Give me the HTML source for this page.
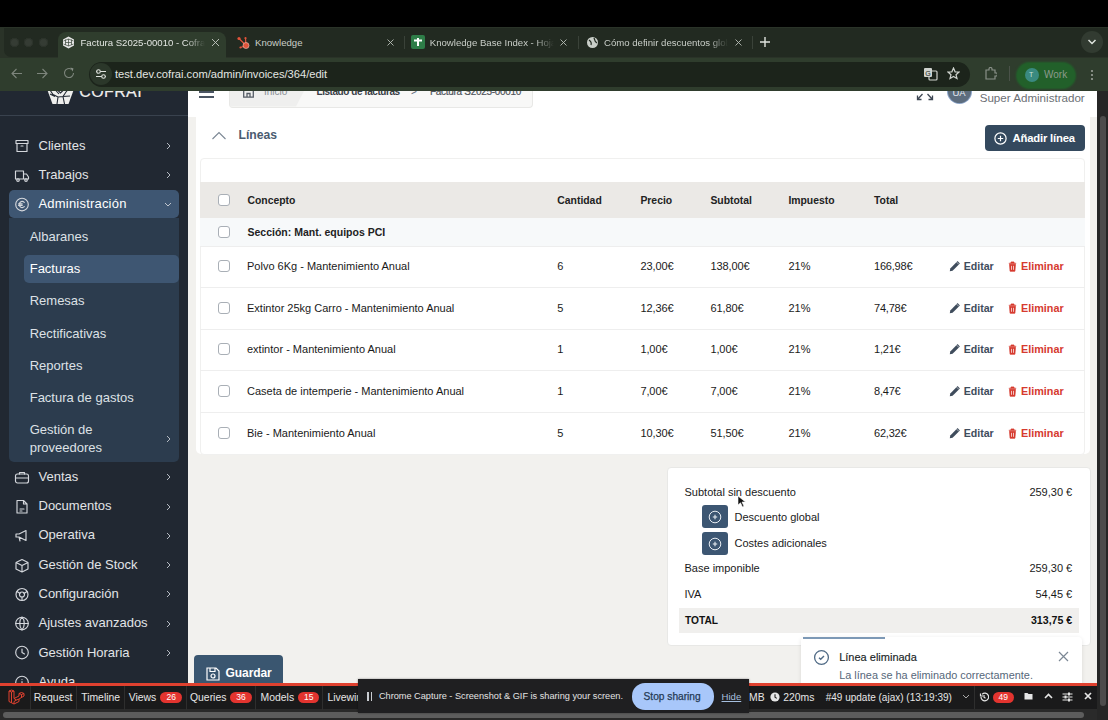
<!DOCTYPE html>
<html><head><meta charset="utf-8"><title>Factura</title>
<style>
html,body{margin:0;padding:0;width:1108px;height:720px;overflow:hidden;background:#000;}
body{position:relative;font-family:"Liberation Sans",sans-serif;}
.b{position:absolute;}
.t{position:absolute;white-space:nowrap;}
</style></head><body>
<div class="b" style="left:0px;top:91px;width:188px;height:593px;background:#212832;"></div>
<svg class="b" style="left:44px;top:84px;" width="34" height="22" viewBox="0 0 34 22"><polygon points="3,5 30,5 24.5,20 8.5,20" fill="#eeeeec"/><path d="M5,4.5L9,10.5L14,13L19,12.5L22,8L25,4.5 M12,4.5L16.5,9L21,4.5 M6,10L11,12.5 M19,12.5L26,12 M14,13L13,20 M19,12.5L20.5,20 M10,4.5L15,10" stroke="#212832" stroke-width="1.1" fill="none"/></svg>
<div class="t" style="left:79.2px;top:82.42px;font-size:16px;line-height:19px;font-weight:400;color:#eeeeec;-webkit-text-stroke:0.2px #eeeeec;letter-spacing:0.4px;">COFRAI</div>
<div class="b" style="left:0px;top:115px;width:188px;height:1px;background:#39424e;"></div>
<svg class="b" style="left:14px;top:138.3px;" width="16" height="15" viewBox="0 0 16 15"><path d="M2,2.5H14V5.5H2Z M3,5.5V13.5H13V5.5 M7,8H9" stroke="#d4d7dc" stroke-width="1.15" fill="none" stroke-linejoin="round" stroke-linecap="round"/></svg>
<div class="t" style="left:38.5px;top:137.56px;font-size:13px;line-height:16px;font-weight:400;color:#e2e4e7;">Clientes</div>
<svg class="b" style="left:166px;top:141.8px;" width="5" height="8" viewBox="0 0 5 8"><path d="M1,1L4,4L1,7" stroke="#b4bac2" stroke-width="1" fill="none"/></svg>
<svg class="b" style="left:14px;top:167.6px;" width="16" height="15" viewBox="0 0 16 15"><path d="M1.5,3H9.5V11H1.5Z M9.5,6H12.5L14.5,9V11H9.5" stroke="#d4d7dc" stroke-width="1.15" fill="none" stroke-linejoin="round" stroke-linecap="round"/><circle cx="4" cy="12" r="1.3" stroke="#d4d7dc" stroke-width="1.15" fill="none" stroke-linejoin="round" stroke-linecap="round"/><circle cx="12" cy="12" r="1.3" stroke="#d4d7dc" stroke-width="1.15" fill="none" stroke-linejoin="round" stroke-linecap="round"/></svg>
<div class="t" style="left:38.5px;top:166.86px;font-size:13px;line-height:16px;font-weight:400;color:#e2e4e7;">Trabajos</div>
<svg class="b" style="left:166px;top:171.1px;" width="5" height="8" viewBox="0 0 5 8"><path d="M1,1L4,4L1,7" stroke="#b4bac2" stroke-width="1" fill="none"/></svg>
<div class="b" style="left:9px;top:190px;width:170px;height:28px;background:#3e5672;border-radius:5px;"></div>
<div class="b" style="left:9px;top:218px;width:170px;height:244px;background:#2c3c4e;border-radius:0 0 5px 5px;"></div>
<svg class="b" style="left:14px;top:197px;" width="16" height="15" viewBox="0 0 16 15"><circle cx="8" cy="7.5" r="6.3" stroke="#d4d7dc" stroke-width="1.15" fill="none" stroke-linejoin="round" stroke-linecap="round"/><path d="M10.3,5.3A3,3 0 1 0 10.3,9.7M4.6,6.8H8.2M4.6,8.4H8.2" stroke="#d4d7dc" stroke-width="1.15" fill="none" stroke-linejoin="round" stroke-linecap="round"/></svg>
<div class="t" style="left:38.5px;top:196.16px;font-size:13px;line-height:16px;font-weight:400;color:#ffffff;letter-spacing:0.2px;">Administración</div>
<svg class="b" style="left:164px;top:202px;" width="8" height="5" viewBox="0 0 8 5"><path d="M1,1L4,4L7,1" stroke="#c0c6ce" stroke-width="1" fill="none"/></svg>
<div class="b" style="left:24px;top:254.5px;width:155px;height:28px;background:#3e5672;border-radius:5px;"></div>
<div class="t" style="left:29.7px;top:229.06px;font-size:13px;line-height:16px;font-weight:400;color:#dde1e6;">Albaranes</div>
<div class="t" style="left:29.7px;top:261.26px;font-size:13px;line-height:16px;font-weight:400;color:#ffffff;">Facturas</div>
<div class="t" style="left:29.7px;top:293.46px;font-size:13px;line-height:16px;font-weight:400;color:#dde1e6;">Remesas</div>
<div class="t" style="left:29.7px;top:325.66px;font-size:13px;line-height:16px;font-weight:400;color:#dde1e6;">Rectificativas</div>
<div class="t" style="left:29.7px;top:357.96px;font-size:13px;line-height:16px;font-weight:400;color:#dde1e6;">Reportes</div>
<div class="t" style="left:29.7px;top:390.16px;font-size:13px;line-height:16px;font-weight:400;color:#dde1e6;">Factura de gastos</div>
<div class="t" style="left:29.7px;top:422.06px;font-size:13px;line-height:16px;font-weight:400;color:#dde1e6;">Gestión de</div>
<div class="t" style="left:29.7px;top:439.76px;font-size:13px;line-height:16px;font-weight:400;color:#dde1e6;">proveedores</div>
<svg class="b" style="left:166px;top:434.5px;" width="5" height="8" viewBox="0 0 5 8"><path d="M1,1L4,4L1,7" stroke="#b4bac2" stroke-width="1" fill="none"/></svg>
<svg class="b" style="left:14px;top:469.75px;" width="16" height="15" viewBox="0 0 16 15"><rect x="1.5" y="4" width="13" height="9" rx="2" stroke="#d4d7dc" stroke-width="1.15" fill="none" stroke-linejoin="round" stroke-linecap="round"/><path d="M5.5,4V2.5H10.5V4M1.5,8H14.5" stroke="#d4d7dc" stroke-width="1.15" fill="none" stroke-linejoin="round" stroke-linecap="round"/></svg>
<div class="t" style="left:38.5px;top:469.01px;font-size:13px;line-height:16px;font-weight:400;color:#e2e4e7;">Ventas</div>
<svg class="b" style="left:166px;top:473.25px;" width="5" height="8" viewBox="0 0 5 8"><path d="M1,1L4,4L1,7" stroke="#b4bac2" stroke-width="1" fill="none"/></svg>
<svg class="b" style="left:14px;top:499px;" width="16" height="15" viewBox="0 0 16 15"><path d="M3,1.5H9.5L13,5V14H3Z M9.5,1.5V5H13 M6,10H10M6,12H8" stroke="#d4d7dc" stroke-width="1.15" fill="none" stroke-linejoin="round" stroke-linecap="round"/></svg>
<div class="t" style="left:38.5px;top:498.26px;font-size:13px;line-height:16px;font-weight:400;color:#e2e4e7;">Documentos</div>
<svg class="b" style="left:166px;top:502.5px;" width="5" height="8" viewBox="0 0 5 8"><path d="M1,1L4,4L1,7" stroke="#b4bac2" stroke-width="1" fill="none"/></svg>
<svg class="b" style="left:14px;top:528.2px;" width="16" height="15" viewBox="0 0 16 15"><path d="M2,6H5L12,2.5V12.5L5,9H2Z M5,9L6,13" stroke="#d4d7dc" stroke-width="1.15" fill="none" stroke-linejoin="round" stroke-linecap="round"/></svg>
<div class="t" style="left:38.5px;top:527.46px;font-size:13px;line-height:16px;font-weight:400;color:#e2e4e7;">Operativa</div>
<svg class="b" style="left:166px;top:531.7px;" width="5" height="8" viewBox="0 0 5 8"><path d="M1,1L4,4L1,7" stroke="#b4bac2" stroke-width="1" fill="none"/></svg>
<svg class="b" style="left:14px;top:557.5px;" width="16" height="15" viewBox="0 0 16 15"><path d="M8,1.5L14,4.5V11L8,14L2,11V4.5Z M2,4.5L8,7.5L14,4.5M8,7.5V14" stroke="#d4d7dc" stroke-width="1.15" fill="none" stroke-linejoin="round" stroke-linecap="round"/></svg>
<div class="t" style="left:38.5px;top:556.76px;font-size:13px;line-height:16px;font-weight:400;color:#e2e4e7;">Gestión de Stock</div>
<svg class="b" style="left:166px;top:561.0px;" width="5" height="8" viewBox="0 0 5 8"><path d="M1,1L4,4L1,7" stroke="#b4bac2" stroke-width="1" fill="none"/></svg>
<svg class="b" style="left:14px;top:586.8px;" width="16" height="15" viewBox="0 0 16 15"><circle cx="8" cy="7.5" r="6" stroke="#d4d7dc" stroke-width="1.15" fill="none" stroke-linejoin="round" stroke-linecap="round"/><circle cx="8" cy="7.5" r="2.5" stroke="#d4d7dc" stroke-width="1.15" fill="none" stroke-linejoin="round" stroke-linecap="round"/><path d="M3,4.5L6,6.5M13,4.5L10,6.5M8,13.5V10" stroke="#d4d7dc" stroke-width="1.15" fill="none" stroke-linejoin="round" stroke-linecap="round"/></svg>
<div class="t" style="left:38.5px;top:586.06px;font-size:13px;line-height:16px;font-weight:400;color:#e2e4e7;">Configuración</div>
<svg class="b" style="left:166px;top:590.3px;" width="5" height="8" viewBox="0 0 5 8"><path d="M1,1L4,4L1,7" stroke="#b4bac2" stroke-width="1" fill="none"/></svg>
<svg class="b" style="left:14px;top:616.1px;" width="16" height="15" viewBox="0 0 16 15"><circle cx="8" cy="7.5" r="6.3" stroke="#d4d7dc" stroke-width="1.15" fill="none" stroke-linejoin="round" stroke-linecap="round"/><path d="M1.7,7.5H14.3M8,1.2C5,4 5,11 8,13.8C11,11 11,4 8,1.2" stroke="#d4d7dc" stroke-width="1.15" fill="none" stroke-linejoin="round" stroke-linecap="round"/></svg>
<div class="t" style="left:38.5px;top:615.36px;font-size:13px;line-height:16px;font-weight:400;color:#e2e4e7;">Ajustes avanzados</div>
<svg class="b" style="left:166px;top:619.6px;" width="5" height="8" viewBox="0 0 5 8"><path d="M1,1L4,4L1,7" stroke="#b4bac2" stroke-width="1" fill="none"/></svg>
<svg class="b" style="left:14px;top:645.4px;" width="16" height="15" viewBox="0 0 16 15"><circle cx="8" cy="7.5" r="6.3" stroke="#d4d7dc" stroke-width="1.15" fill="none" stroke-linejoin="round" stroke-linecap="round"/><path d="M8,4V7.5L10.5,9" stroke="#d4d7dc" stroke-width="1.15" fill="none" stroke-linejoin="round" stroke-linecap="round"/></svg>
<div class="t" style="left:38.5px;top:644.66px;font-size:13px;line-height:16px;font-weight:400;color:#e2e4e7;">Gestión Horaria</div>
<svg class="b" style="left:166px;top:648.9px;" width="5" height="8" viewBox="0 0 5 8"><path d="M1,1L4,4L1,7" stroke="#b4bac2" stroke-width="1" fill="none"/></svg>
<svg class="b" style="left:14px;top:674.7px;" width="16" height="15" viewBox="0 0 16 15"><circle cx="8" cy="7.5" r="6.3" stroke="#d4d7dc" stroke-width="1.15" fill="none" stroke-linejoin="round" stroke-linecap="round"/><path d="M8,6.5V11M8,4.5V4.6" stroke="#d4d7dc" stroke-width="1.15" fill="none" stroke-linejoin="round" stroke-linecap="round"/></svg>
<div class="t" style="left:38.5px;top:673.96px;font-size:13px;line-height:16px;font-weight:400;color:#e2e4e7;">Ayuda</div>
<div class="b" style="left:188px;top:91px;width:909px;height:593px;background:#f2f1ee;"></div>
<div class="b" style="left:188px;top:91px;width:909px;height:26px;background:#ffffff;"></div>
<div class="b" style="left:199px;top:91.2px;width:15px;height:1.5px;background:#4b5563;"></div>
<div class="b" style="left:199px;top:96.1px;width:15px;height:1.6px;background:#4b5563;"></div>
<div class="b" style="left:229px;top:91px;width:304px;height:17px;background:#f8f8f7;border:1px solid #e8e8e6;border-top:none;border-radius:0 0 4px 4px;box-sizing:border-box;"></div>
<svg class="b" style="left:230px;top:91px;" width="80" height="15.5" viewBox="0 0 80 15.5"><polygon points="0,0 74,0 66,15.5 0,15.5" fill="#efefee"/></svg>
<svg class="b" style="left:243px;top:89px;" width="11" height="9" viewBox="0 0 11 9"><path d="M0.7,0V8.2H10.3V0 M4,8.2V4.5H7V8.2" stroke="#555c66" stroke-width="1.3" fill="none"/></svg>
<div class="t" style="left:264px;top:85.70px;font-size:10px;line-height:12px;font-weight:400;color:#8a8f96;">Inicio</div>
<div class="t" style="left:316.5px;top:85.70px;font-size:10px;line-height:12px;font-weight:700;color:#3a3f47;letter-spacing:-0.45px;">Listado de facturas</div>
<div class="t" style="left:411px;top:86.20px;font-size:10px;line-height:12px;font-weight:400;color:#6b7280;">&gt;</div>
<div class="t" style="left:430px;top:85.70px;font-size:10px;line-height:12px;font-weight:400;color:#50555c;letter-spacing:-0.3px;-webkit-text-stroke:0.2px #50555c;">Factura S2025-00010</div>
<svg class="b" style="left:915.5px;top:92.5px;" width="18" height="9" viewBox="0 0 18 9"><path d="M6.5,1L1.5,6.5M1.5,2.5V6.5H5.5 M11.5,1L16.5,6.5M16.5,2.5V6.5H12.5" stroke="#3f4854" stroke-width="1.3" fill="none"/></svg>
<div class="b" style="left:948px;top:80px;width:23px;height:23px;border-radius:50%;background:#5d6d7e;box-shadow:0 0 0 1px #8aa3c8"></div>
<div class="t" style="left:952.5px;top:86.99px;font-size:9.5px;line-height:11px;font-weight:400;color:#e5e9ee;">UA</div>
<div class="t" style="left:979.7px;top:91.23px;font-size:11.6px;line-height:14px;font-weight:400;color:#6b6f74;">Super Administrador</div>
<div class="b" style="left:196px;top:117px;width:894px;height:337px;background:#ffffff;border-radius:0 0 5px 5px;"></div>
<svg class="b" style="left:211px;top:130.5px;" width="16" height="9" viewBox="0 0 16 9"><path d="M1.5,8L8,1.5L14.5,8" stroke="#7b8794" stroke-width="1.1" fill="none"/></svg>
<div class="t" style="left:238.5px;top:128.24px;font-size:12.2px;line-height:15px;font-weight:700;color:#4a5b70;">Líneas</div>
<div class="b" style="left:985px;top:125px;width:99.5px;height:26px;background:#34495e;border-radius:4px;"></div>
<svg class="b" style="left:994px;top:132px;" width="13" height="13" viewBox="0 0 13 13"><circle cx="6.5" cy="6.5" r="5.6" stroke="#fff" stroke-width="1.2" fill="none"/><path d="M6.5,3.8V9.2M3.8,6.5H9.2" stroke="#fff" stroke-width="1.2"/></svg>
<div class="t" style="left:1012.6px;top:131.23px;font-size:11.3px;line-height:14px;font-weight:700;color:#ffffff;letter-spacing:-0.2px;">Añadir línea</div>
<div class="b" style="left:200px;top:158px;width:885px;height:296.5px;background:#ffffff;border:1px solid #f0f0ef;box-sizing:border-box;border-radius:4px;"></div>
<div class="b" style="left:200px;top:182px;width:885px;height:36px;background:#ebe9e6;"></div>
<div class="b" style="left:200px;top:218px;width:885px;height:27.5px;background:#f7f9fa;"></div>
<div class="b" style="left:200px;top:245.5px;width:885px;height:1px;background:#eeeeee;"></div>
<div class="b" style="left:200px;top:287px;width:885px;height:1px;background:#eeeeee;"></div>
<div class="b" style="left:200px;top:328.6px;width:885px;height:1px;background:#eeeeee;"></div>
<div class="b" style="left:200px;top:370.3px;width:885px;height:1px;background:#eeeeee;"></div>
<div class="b" style="left:200px;top:412px;width:885px;height:1px;background:#eeeeee;"></div>
<div class="b" style="left:217.5px;top:194.1px;width:12px;height:12px;border:1px solid #a9afb6;border-radius:3px;box-sizing:border-box;background:#fff"></div>
<div class="b" style="left:217.5px;top:225.6px;width:12px;height:12px;border:1px solid #a9afb6;border-radius:3px;box-sizing:border-box;background:#fff"></div>
<div class="t" style="left:247.5px;top:195.21px;font-size:10.4px;line-height:12px;font-weight:700;color:#222222;">Concepto</div>
<div class="t" style="left:557.3px;top:195.21px;font-size:10.4px;line-height:12px;font-weight:700;color:#222222;">Cantidad</div>
<div class="t" style="left:640.4px;top:195.21px;font-size:10.4px;line-height:12px;font-weight:700;color:#222222;">Precio</div>
<div class="t" style="left:710.4px;top:195.21px;font-size:10.4px;line-height:12px;font-weight:700;color:#222222;">Subtotal</div>
<div class="t" style="left:788.4px;top:195.21px;font-size:10.4px;line-height:12px;font-weight:700;color:#222222;">Impuesto</div>
<div class="t" style="left:874px;top:195.21px;font-size:10.4px;line-height:12px;font-weight:700;color:#222222;">Total</div>
<div class="t" style="left:247.5px;top:225.71px;font-size:10.5px;line-height:13px;font-weight:700;color:#222222;">Sección: Mant. equipos PCI</div>
<div class="b" style="left:217.5px;top:260px;width:12px;height:12px;border:1px solid #a9afb6;border-radius:3px;box-sizing:border-box;background:#fff"></div>
<div class="t" style="left:247px;top:259.72px;font-size:11px;line-height:13px;font-weight:400;color:#1a1a1a;">Polvo 6Kg - Mantenimiento Anual</div>
<div class="t" style="left:557.3px;top:259.72px;font-size:11px;line-height:13px;font-weight:400;color:#1a1a1a;">6</div>
<div class="t" style="left:640.4px;top:259.72px;font-size:11px;line-height:13px;font-weight:400;color:#1a1a1a;letter-spacing:-0.1px;">23,00€</div>
<div class="t" style="left:710.4px;top:259.72px;font-size:11px;line-height:13px;font-weight:400;color:#1a1a1a;letter-spacing:-0.1px;">138,00€</div>
<div class="t" style="left:788.4px;top:259.72px;font-size:11px;line-height:13px;font-weight:400;color:#1a1a1a;">21%</div>
<div class="t" style="left:874px;top:259.72px;font-size:11px;line-height:13px;font-weight:400;color:#1a1a1a;letter-spacing:-0.2px;">166,98€</div>
<svg class="b" style="left:949px;top:259.8px;" width="12" height="12" viewBox="0 0 12 12"><path d="M0.8,11.2L1.3,8.4L8.6,1.1L10.9,3.4L3.6,10.7Z" fill="#3f4c5c"/><path d="M7.6,2.1L9.9,4.4" stroke="#fff" stroke-width="0.6"/></svg>
<div class="t" style="left:963.7px;top:259.71px;font-size:10.6px;line-height:13px;font-weight:700;color:#3f4c5c;">Editar</div>
<svg class="b" style="left:1007.8px;top:260.7px;" width="9" height="11" viewBox="0 0 9 11"><path d="M0.8,2.3H8.2M3,2.3V1H6V2.3 M1.6,3.2H7.4L6.9,10.2H2.1Z" fill="#d63a2f" stroke="#d63a2f" stroke-width="0.8"/><path d="M3.5,4.8V8.8M5.5,4.8V8.8" stroke="#fff" stroke-width="0.7"/></svg>
<div class="t" style="left:1021px;top:259.72px;font-size:10.8px;line-height:13px;font-weight:700;color:#d63a2f;">Eliminar</div>
<div class="b" style="left:217.5px;top:301.8px;width:12px;height:12px;border:1px solid #a9afb6;border-radius:3px;box-sizing:border-box;background:#fff"></div>
<div class="t" style="left:247px;top:301.52px;font-size:11px;line-height:13px;font-weight:400;color:#1a1a1a;">Extintor 25kg Carro - Mantenimiento Anual</div>
<div class="t" style="left:557.3px;top:301.52px;font-size:11px;line-height:13px;font-weight:400;color:#1a1a1a;">5</div>
<div class="t" style="left:640.4px;top:301.52px;font-size:11px;line-height:13px;font-weight:400;color:#1a1a1a;letter-spacing:-0.1px;">12,36€</div>
<div class="t" style="left:710.4px;top:301.52px;font-size:11px;line-height:13px;font-weight:400;color:#1a1a1a;letter-spacing:-0.1px;">61,80€</div>
<div class="t" style="left:788.4px;top:301.52px;font-size:11px;line-height:13px;font-weight:400;color:#1a1a1a;">21%</div>
<div class="t" style="left:874px;top:301.52px;font-size:11px;line-height:13px;font-weight:400;color:#1a1a1a;letter-spacing:-0.2px;">74,78€</div>
<svg class="b" style="left:949px;top:301.6px;" width="12" height="12" viewBox="0 0 12 12"><path d="M0.8,11.2L1.3,8.4L8.6,1.1L10.9,3.4L3.6,10.7Z" fill="#3f4c5c"/><path d="M7.6,2.1L9.9,4.4" stroke="#fff" stroke-width="0.6"/></svg>
<div class="t" style="left:963.7px;top:301.51px;font-size:10.6px;line-height:13px;font-weight:700;color:#3f4c5c;">Editar</div>
<svg class="b" style="left:1007.8px;top:302.5px;" width="9" height="11" viewBox="0 0 9 11"><path d="M0.8,2.3H8.2M3,2.3V1H6V2.3 M1.6,3.2H7.4L6.9,10.2H2.1Z" fill="#d63a2f" stroke="#d63a2f" stroke-width="0.8"/><path d="M3.5,4.8V8.8M5.5,4.8V8.8" stroke="#fff" stroke-width="0.7"/></svg>
<div class="t" style="left:1021px;top:301.52px;font-size:10.8px;line-height:13px;font-weight:700;color:#d63a2f;">Eliminar</div>
<div class="b" style="left:217.5px;top:343.4px;width:12px;height:12px;border:1px solid #a9afb6;border-radius:3px;box-sizing:border-box;background:#fff"></div>
<div class="t" style="left:247px;top:343.12px;font-size:11px;line-height:13px;font-weight:400;color:#1a1a1a;">extintor - Mantenimiento Anual</div>
<div class="t" style="left:557.3px;top:343.12px;font-size:11px;line-height:13px;font-weight:400;color:#1a1a1a;">1</div>
<div class="t" style="left:640.4px;top:343.12px;font-size:11px;line-height:13px;font-weight:400;color:#1a1a1a;letter-spacing:-0.1px;">1,00€</div>
<div class="t" style="left:710.4px;top:343.12px;font-size:11px;line-height:13px;font-weight:400;color:#1a1a1a;letter-spacing:-0.1px;">1,00€</div>
<div class="t" style="left:788.4px;top:343.12px;font-size:11px;line-height:13px;font-weight:400;color:#1a1a1a;">21%</div>
<div class="t" style="left:874px;top:343.12px;font-size:11px;line-height:13px;font-weight:400;color:#1a1a1a;letter-spacing:-0.2px;">1,21€</div>
<svg class="b" style="left:949px;top:343.2px;" width="12" height="12" viewBox="0 0 12 12"><path d="M0.8,11.2L1.3,8.4L8.6,1.1L10.9,3.4L3.6,10.7Z" fill="#3f4c5c"/><path d="M7.6,2.1L9.9,4.4" stroke="#fff" stroke-width="0.6"/></svg>
<div class="t" style="left:963.7px;top:343.11px;font-size:10.6px;line-height:13px;font-weight:700;color:#3f4c5c;">Editar</div>
<svg class="b" style="left:1007.8px;top:344.09999999999997px;" width="9" height="11" viewBox="0 0 9 11"><path d="M0.8,2.3H8.2M3,2.3V1H6V2.3 M1.6,3.2H7.4L6.9,10.2H2.1Z" fill="#d63a2f" stroke="#d63a2f" stroke-width="0.8"/><path d="M3.5,4.8V8.8M5.5,4.8V8.8" stroke="#fff" stroke-width="0.7"/></svg>
<div class="t" style="left:1021px;top:343.12px;font-size:10.8px;line-height:13px;font-weight:700;color:#d63a2f;">Eliminar</div>
<div class="b" style="left:217.5px;top:385px;width:12px;height:12px;border:1px solid #a9afb6;border-radius:3px;box-sizing:border-box;background:#fff"></div>
<div class="t" style="left:247px;top:384.72px;font-size:11px;line-height:13px;font-weight:400;color:#1a1a1a;">Caseta de intemperie - Mantenimiento Anual</div>
<div class="t" style="left:557.3px;top:384.72px;font-size:11px;line-height:13px;font-weight:400;color:#1a1a1a;">1</div>
<div class="t" style="left:640.4px;top:384.72px;font-size:11px;line-height:13px;font-weight:400;color:#1a1a1a;letter-spacing:-0.1px;">7,00€</div>
<div class="t" style="left:710.4px;top:384.72px;font-size:11px;line-height:13px;font-weight:400;color:#1a1a1a;letter-spacing:-0.1px;">7,00€</div>
<div class="t" style="left:788.4px;top:384.72px;font-size:11px;line-height:13px;font-weight:400;color:#1a1a1a;">21%</div>
<div class="t" style="left:874px;top:384.72px;font-size:11px;line-height:13px;font-weight:400;color:#1a1a1a;letter-spacing:-0.2px;">8,47€</div>
<svg class="b" style="left:949px;top:384.8px;" width="12" height="12" viewBox="0 0 12 12"><path d="M0.8,11.2L1.3,8.4L8.6,1.1L10.9,3.4L3.6,10.7Z" fill="#3f4c5c"/><path d="M7.6,2.1L9.9,4.4" stroke="#fff" stroke-width="0.6"/></svg>
<div class="t" style="left:963.7px;top:384.71px;font-size:10.6px;line-height:13px;font-weight:700;color:#3f4c5c;">Editar</div>
<svg class="b" style="left:1007.8px;top:385.7px;" width="9" height="11" viewBox="0 0 9 11"><path d="M0.8,2.3H8.2M3,2.3V1H6V2.3 M1.6,3.2H7.4L6.9,10.2H2.1Z" fill="#d63a2f" stroke="#d63a2f" stroke-width="0.8"/><path d="M3.5,4.8V8.8M5.5,4.8V8.8" stroke="#fff" stroke-width="0.7"/></svg>
<div class="t" style="left:1021px;top:384.72px;font-size:10.8px;line-height:13px;font-weight:700;color:#d63a2f;">Eliminar</div>
<div class="b" style="left:217.5px;top:426.8px;width:12px;height:12px;border:1px solid #a9afb6;border-radius:3px;box-sizing:border-box;background:#fff"></div>
<div class="t" style="left:247px;top:426.52px;font-size:11px;line-height:13px;font-weight:400;color:#1a1a1a;">Bie - Mantenimiento Anual</div>
<div class="t" style="left:557.3px;top:426.52px;font-size:11px;line-height:13px;font-weight:400;color:#1a1a1a;">5</div>
<div class="t" style="left:640.4px;top:426.52px;font-size:11px;line-height:13px;font-weight:400;color:#1a1a1a;letter-spacing:-0.1px;">10,30€</div>
<div class="t" style="left:710.4px;top:426.52px;font-size:11px;line-height:13px;font-weight:400;color:#1a1a1a;letter-spacing:-0.1px;">51,50€</div>
<div class="t" style="left:788.4px;top:426.52px;font-size:11px;line-height:13px;font-weight:400;color:#1a1a1a;">21%</div>
<div class="t" style="left:874px;top:426.52px;font-size:11px;line-height:13px;font-weight:400;color:#1a1a1a;letter-spacing:-0.2px;">62,32€</div>
<svg class="b" style="left:949px;top:426.6px;" width="12" height="12" viewBox="0 0 12 12"><path d="M0.8,11.2L1.3,8.4L8.6,1.1L10.9,3.4L3.6,10.7Z" fill="#3f4c5c"/><path d="M7.6,2.1L9.9,4.4" stroke="#fff" stroke-width="0.6"/></svg>
<div class="t" style="left:963.7px;top:426.51px;font-size:10.6px;line-height:13px;font-weight:700;color:#3f4c5c;">Editar</div>
<svg class="b" style="left:1007.8px;top:427.5px;" width="9" height="11" viewBox="0 0 9 11"><path d="M0.8,2.3H8.2M3,2.3V1H6V2.3 M1.6,3.2H7.4L6.9,10.2H2.1Z" fill="#d63a2f" stroke="#d63a2f" stroke-width="0.8"/><path d="M3.5,4.8V8.8M5.5,4.8V8.8" stroke="#fff" stroke-width="0.7"/></svg>
<div class="t" style="left:1021px;top:426.52px;font-size:10.8px;line-height:13px;font-weight:700;color:#d63a2f;">Eliminar</div>
<div class="b" style="left:666.5px;top:466.5px;width:424px;height:179.5px;background:#ffffff;border:1px solid #e8e8e6;box-sizing:border-box;border-radius:4px;"></div>
<div class="t" style="left:684.5px;top:485.72px;font-size:11px;line-height:13px;font-weight:400;color:#1a1a1a;">Subtotal sin descuento</div>
<div class="t" style="right:35.799999999999955px;top:485.72px;font-size:11px;line-height:13px;font-weight:400;color:#1a1a1a;">259,30 €</div>
<div class="b" style="left:702px;top:505px;width:26px;height:23px;background:#3c5672;border-radius:3px;"></div>
<svg class="b" style="left:708px;top:509.5px;" width="14" height="14" viewBox="0 0 14 14"><circle cx="7" cy="7" r="5.8" stroke="#e8edf2" stroke-width="1" fill="none"/><path d="M7,4.8V9.2M4.8,7H9.2" stroke="#e8edf2" stroke-width="1.1"/></svg>
<div class="b" style="left:702px;top:532px;width:26px;height:23px;background:#3c5672;border-radius:3px;"></div>
<svg class="b" style="left:708px;top:536.5px;" width="14" height="14" viewBox="0 0 14 14"><circle cx="7" cy="7" r="5.8" stroke="#e8edf2" stroke-width="1" fill="none"/><path d="M7,4.8V9.2M4.8,7H9.2" stroke="#e8edf2" stroke-width="1.1"/></svg>
<div class="t" style="left:734.5px;top:510.72px;font-size:11px;line-height:13px;font-weight:400;color:#1a1a1a;">Descuento global</div>
<div class="t" style="left:734.5px;top:536.72px;font-size:11px;line-height:13px;font-weight:400;color:#1a1a1a;">Costes adicionales</div>
<div class="t" style="left:684.5px;top:561.72px;font-size:11px;line-height:13px;font-weight:400;color:#1a1a1a;">Base imponible</div>
<div class="t" style="right:35.799999999999955px;top:561.72px;font-size:11px;line-height:13px;font-weight:400;color:#1a1a1a;">259,30 €</div>
<div class="t" style="left:684.5px;top:588.22px;font-size:11px;line-height:13px;font-weight:400;color:#1a1a1a;">IVA</div>
<div class="t" style="right:35.799999999999955px;top:588.22px;font-size:11px;line-height:13px;font-weight:400;color:#1a1a1a;">54,45 €</div>
<div class="b" style="left:679px;top:608px;width:399.5px;height:25px;background:#f0efed;"></div>
<div class="t" style="left:685px;top:614.95px;font-size:10.2px;line-height:12px;font-weight:700;color:#111;">TOTAL</div>
<div class="t" style="right:35.799999999999955px;top:614.46px;font-size:10.6px;line-height:13px;font-weight:700;color:#111;">313,75 €</div>
<svg class="b" style="left:737px;top:495px;" width="9" height="13" viewBox="0 0 9 13"><path d="M1,1V10L3.5,7.8L5.5,12L7,11.3L5,7H8.5Z" fill="#111" stroke="#fff" stroke-width="0.6"/></svg>
<div class="b" style="left:193.7px;top:655.3px;width:89.3px;height:30px;background:#3a5670;border-radius:4px 4px 0 0;"></div>
<svg class="b" style="left:205.5px;top:666.5px;" width="14" height="14" viewBox="0 0 14 14"><path d="M1,1H10L13,4V13H1Z M4,1V4.5H9V1" stroke="#fff" stroke-width="1.2" fill="none"/><circle cx="7" cy="9" r="2" stroke="#fff" stroke-width="1.2" fill="none"/></svg>
<div class="t" style="left:225.6px;top:665.74px;font-size:12px;line-height:14px;font-weight:700;color:#ffffff;letter-spacing:-0.1px;">Guardar</div>
<div class="b" style="left:801px;top:637px;width:281px;height:50px;background:#ffffff;border-radius:4px;box-shadow:0 1px 4px rgba(0,0,0,0.10);"></div>
<div class="b" style="left:803px;top:637px;width:82px;height:1.5px;background:#7d99b6;"></div>
<svg class="b" style="left:813px;top:649.2px;" width="17" height="17" viewBox="0 0 17 17"><circle cx="8.5" cy="8.5" r="6.9" stroke="#4f6a85" stroke-width="1.3" fill="none"/><path d="M6,8.8L7.7,10.3L11,7" stroke="#4f6a85" stroke-width="1.4" fill="none"/></svg>
<div class="t" style="left:839.2px;top:651.22px;font-size:11px;line-height:13px;font-weight:400;color:#1a1f26;-webkit-text-stroke:0.15px #1a1f26;">Línea eliminada</div>
<div class="t" style="left:839.2px;top:668.72px;font-size:10.9px;line-height:13px;font-weight:400;color:#56677a;">La línea se ha eliminado correctamente.</div>
<svg class="b" style="left:1058px;top:651px;" width="11" height="11" viewBox="0 0 11 11"><path d="M1,1L10,10M10,1L1,10" stroke="#7b8794" stroke-width="1.2"/></svg>
<div class="b" style="left:0px;top:683px;width:1097px;height:2.8px;background:#e0412f;"></div>
<div class="b" style="left:0px;top:685.8px;width:1097px;height:23.4px;background:#1a1a1b;"></div>
<div class="b" style="left:0px;top:709.2px;width:1097px;height:10.8px;background:#2a2a2a;"></div>
<div class="b" style="left:3px;top:712px;width:1081px;height:6px;background:#5d5d5d;border-radius:3px;"></div>
<svg class="b" style="left:7.5px;top:688.5px;" width="17" height="16" viewBox="0 0 17 16"><path d="M1,2L3.5,1L6,2V9.5L11,7V4.5L13.5,3.5L16,4.5V7L11,10V12.5L6,15L1,12.5Z M1,2L3.5,3L6,2 M3.5,3V13.8 M6,9.5L8.5,11L11,10 M11,4.5L13.5,5.5L16,4.5 M13.5,5.5V8.5 M6,15V12.5L8.5,11" stroke="#e0412f" stroke-width="1" fill="none" stroke-linejoin="round"/></svg>
<div class="b" style="left:30px;top:685.5px;width:1px;height:24.5px;background:#2e2e2e;"></div>
<div class="b" style="left:76.3px;top:685.5px;width:1px;height:24.5px;background:#2e2e2e;"></div>
<div class="b" style="left:123.5px;top:685.5px;width:1px;height:24.5px;background:#2e2e2e;"></div>
<div class="b" style="left:185.8px;top:685.5px;width:1px;height:24.5px;background:#2e2e2e;"></div>
<div class="b" style="left:255px;top:685.5px;width:1px;height:24.5px;background:#2e2e2e;"></div>
<div class="b" style="left:321.6px;top:685.5px;width:1px;height:24.5px;background:#2e2e2e;"></div>
<div class="t" style="left:33.8px;top:692.21px;font-size:10.4px;line-height:12px;font-weight:400;color:#e6e6e6;">Request</div>
<div class="t" style="left:81.2px;top:692.21px;font-size:10.4px;line-height:12px;font-weight:400;color:#e6e6e6;">Timeline</div>
<div class="t" style="left:128.7px;top:692.21px;font-size:10.4px;line-height:12px;font-weight:400;color:#e6e6e6;">Views</div>
<div class="t" style="left:190px;top:692.21px;font-size:10.4px;line-height:12px;font-weight:400;color:#e6e6e6;">Queries</div>
<div class="t" style="left:260.6px;top:692.21px;font-size:10.4px;line-height:12px;font-weight:400;color:#e6e6e6;">Models</div>
<div class="t" style="left:327.5px;top:692.21px;font-size:10.4px;line-height:12px;font-weight:400;color:#e6e6e6;">Livewire</div>
<div class="b" style="left:160.2px;top:691.5px;width:22px;height:11px;border-radius:6px;background:#e3342f;color:#fff;font-size:8.5px;line-height:11px;text-align:center">26</div>
<div class="b" style="left:230px;top:691.5px;width:22px;height:11px;border-radius:6px;background:#e3342f;color:#fff;font-size:8.5px;line-height:11px;text-align:center">36</div>
<div class="b" style="left:298.3px;top:691.5px;width:21px;height:11px;border-radius:6px;background:#e3342f;color:#fff;font-size:8.5px;line-height:11px;text-align:center">15</div>
<div class="b" style="left:358px;top:679.2px;width:391px;height:34.3px;background:#1f1f21;box-shadow:0 0 2px rgba(0,0,0,.4);"></div>
<div class="b" style="left:367.3px;top:691.5px;width:1.3px;height:9.5px;background:#c9ccd1;"></div>
<div class="b" style="left:370.6px;top:691.5px;width:1.3px;height:9.5px;background:#c9ccd1;"></div>
<div class="t" style="left:378.9px;top:691.28px;font-size:9.2px;line-height:11px;font-weight:400;color:#e3e3e3;">Chrome Capture - Screenshot &amp; GIF is sharing your screen.</div>
<div class="b" style="left:632px;top:683.2px;width:81.5px;height:26.5px;background:#a8c7fa;border-radius:13px;"></div>
<div class="t" style="left:643.5px;top:691.20px;font-size:10.2px;line-height:12px;font-weight:400;color:#253a54;-webkit-text-stroke:0.25px #253a54;">Stop sharing</div>
<div class="t" style="left:721.5px;top:691.19px;font-size:9.6px;line-height:12px;font-weight:400;color:#a6bfdf;text-decoration:underline;">Hide</div>
<div class="t" style="left:749px;top:692.21px;font-size:10.4px;line-height:12px;font-weight:400;color:#e6e6e6;">MB</div>
<svg class="b" style="left:770px;top:692px;" width="10" height="10" viewBox="0 0 10 10"><circle cx="5" cy="5" r="4.6" fill="#e6e6e6"/><path d="M5,2.3V5.2L6.8,6.4" stroke="#1d1d1d" stroke-width="1.1" fill="none"/></svg>
<div class="t" style="left:783.2px;top:692.21px;font-size:10.4px;line-height:12px;font-weight:400;color:#e6e6e6;">220ms</div>
<div class="t" style="left:825.7px;top:692.20px;font-size:10px;line-height:12px;font-weight:400;color:#e6e6e6;">#49 update (ajax) (13:19:39)</div>
<svg class="b" style="left:962px;top:694px;" width="8" height="5" viewBox="0 0 8 5"><path d="M1,1L4,4L7,1" stroke="#aaa" stroke-width="1" fill="none"/></svg>
<div class="b" style="left:974px;top:686px;width:1px;height:23px;background:#2e2e2e;"></div>
<svg class="b" style="left:979px;top:691.5px;" width="10" height="10" viewBox="0 0 10 10"><path d="M2,5A3.8,3.8 0 1 0 3.2,2.2M1.5,1.5V4H4M5,3V5.3L6.5,6.3" stroke="#e6e6e6" stroke-width="1.2" fill="none"/></svg>
<div class="b" style="left:992.5px;top:691.5px;width:21.5px;height:11px;border-radius:6px;background:#e3342f;color:#fff;font-size:8.5px;line-height:11px;text-align:center">49</div>
<svg class="b" style="left:1024px;top:692px;" width="9" height="8" viewBox="0 0 9 8"><path d="M0.5,1H3.5L4.5,2H8.5V7.5H0.5Z" fill="#e6e6e6"/></svg>
<svg class="b" style="left:1044px;top:693px;" width="9" height="6" viewBox="0 0 9 6"><path d="M1,5L4.5,1.5L8,5" stroke="#e6e6e6" stroke-width="1.6" fill="none"/></svg>
<svg class="b" style="left:1062px;top:691.5px;" width="11" height="10" viewBox="0 0 11 10"><path d="M0.5,2H10.5M0.5,5H10.5M0.5,8H10.5" stroke="#e6e6e6" stroke-width="1"/><rect x="6" y="0.5" width="2" height="3" fill="#e6e6e6"/><rect x="2.5" y="3.5" width="2" height="3" fill="#e6e6e6"/><rect x="6" y="6.5" width="2" height="3" fill="#e6e6e6"/></svg>
<svg class="b" style="left:1084px;top:692px;" width="8" height="8" viewBox="0 0 8 8"><path d="M1,1L7,7M7,1L1,7" stroke="#e6e6e6" stroke-width="1.7"/></svg>
<div class="b" style="left:1097px;top:91px;width:11px;height:629px;background:#262626;"></div>
<div class="b" style="left:1100px;top:116px;width:6px;height:590px;background:#4c4c4c;border-radius:3px;"></div>
<div class="b" style="left:0px;top:0px;width:1108px;height:27px;background:#000;"></div>
<div class="b" style="left:0px;top:27px;width:1108px;height:31px;background:#2a3328;"></div>
<div class="b" style="left:4px;top:28px;width:1104px;height:29px;background:#222a21;border-radius:0 0 0 7px;"></div>
<div class="b" style="left:58px;top:32px;width:168px;height:27px;background:#2f3d2d;border-radius:8px 8px 0 0;"></div>
<div class="b" style="left:0px;top:58px;width:1108px;height:33px;background:#2f3d2d;"></div>
<div class="b" style="left:9.5px;top:38px;width:9px;height:9px;border-radius:50%;background:#353c34;box-shadow:inset 0 0 0 1px #2c332b"></div>
<div class="b" style="left:24.1px;top:38px;width:9px;height:9px;border-radius:50%;background:#353c34;box-shadow:inset 0 0 0 1px #2c332b"></div>
<div class="b" style="left:39.0px;top:38px;width:9px;height:9px;border-radius:50%;background:#353c34;box-shadow:inset 0 0 0 1px #2c332b"></div>
<svg class="b" style="left:62px;top:36px;" width="13" height="13" viewBox="0 0 13 13"><polygon points="6.5,0.5 12,3.5 12,9.5 6.5,12.5 1,9.5 1,3.5" fill="#e8e8e8"/><path d="M1.5,5L6.5,3L11.5,5M1.5,8L6.5,10L11.5,8M6.5,3V10M3.5,3.5L3.5,9M9.5,3.5V9M3.5,6.5H9.5" stroke="#3a463a" stroke-width="0.7" fill="none"/></svg>
<div class="t" style="left:80.5px;top:36.69px;font-size:9.6px;line-height:12px;font-weight:400;color:#e3e6e2;width:124px;overflow:hidden;white-space:nowrap;-webkit-mask-image:linear-gradient(90deg,#000 85%,transparent);">Factura S2025-00010 - Cofrai</div>
<svg class="b" style="left:210px;top:37px;" width="11" height="11" viewBox="0 0 11 11"><path d="M2,2L9,9M9,2L2,9" stroke="#c5cac4" stroke-width="0.9"/></svg>
<svg class="b" style="left:236px;top:35px;" width="14" height="14" viewBox="0 0 14 14"><path d="M10,10.5L3,3.5M10,10.5L9.5,3.5M10,10.5L4.5,12.5" stroke="#e0533a" stroke-width="1.2"/><circle cx="3" cy="3.5" r="1.6" fill="#e0533a"/><circle cx="9.5" cy="3.2" r="1.1" fill="#e0533a"/><circle cx="4.5" cy="12.5" r="1.1" fill="#e0533a"/><circle cx="10" cy="10.5" r="3" fill="#e0533a" stroke="#f3c9bf" stroke-width="0.6"/></svg>
<div class="t" style="left:255px;top:36.69px;font-size:9.6px;line-height:12px;font-weight:400;color:#c9cec8;">Knowledge</div>
<svg class="b" style="left:385px;top:37px;" width="11" height="11" viewBox="0 0 11 11"><path d="M2.5,2.5L8.5,8.5M8.5,2.5L2.5,8.5" stroke="#b9beb8" stroke-width="0.9"/></svg>
<div class="b" style="left:404px;top:36px;width:1px;height:13px;background:#3a4239;"></div>
<div class="b" style="left:411px;top:35px;width:14px;height:14px;background:#2e7d48;border-radius:2px;"></div>
<svg class="b" style="left:411px;top:35px;" width="14" height="14" viewBox="0 0 14 14"><path d="M7,3V11M3,5.5H11" stroke="#fff" stroke-width="2"/></svg>
<div class="t" style="left:429.8px;top:36.69px;font-size:9.6px;line-height:12px;font-weight:400;color:#c9cec8;width:124px;overflow:hidden;white-space:nowrap;-webkit-mask-image:linear-gradient(90deg,#000 85%,transparent);">Knowledge Base Index - Hoja</div>
<svg class="b" style="left:558px;top:37px;" width="11" height="11" viewBox="0 0 11 11"><path d="M2.5,2.5L8.5,8.5M8.5,2.5L2.5,8.5" stroke="#b9beb8" stroke-width="0.9"/></svg>
<div class="b" style="left:578px;top:36px;width:1px;height:13px;background:#3a4239;"></div>
<svg class="b" style="left:586px;top:36px;" width="13" height="13" viewBox="0 0 13 13"><circle cx="6.5" cy="6.5" r="5.5" fill="#c9cec8"/><path d="M3,4Q6,6 5,9M8,2Q9,6 11,7" stroke="#222a21" stroke-width="1.2" fill="none"/></svg>
<div class="t" style="left:604px;top:36.69px;font-size:9.6px;line-height:12px;font-weight:400;color:#c9cec8;width:124px;overflow:hidden;white-space:nowrap;-webkit-mask-image:linear-gradient(90deg,#000 85%,transparent);">Cómo definir descuentos globales</div>
<svg class="b" style="left:733px;top:37px;" width="11" height="11" viewBox="0 0 11 11"><path d="M2.5,2.5L8.5,8.5M8.5,2.5L2.5,8.5" stroke="#b9beb8" stroke-width="0.9"/></svg>
<div class="b" style="left:752px;top:36px;width:1px;height:13px;background:#3a4239;"></div>
<svg class="b" style="left:759px;top:36px;" width="12" height="12" viewBox="0 0 12 12"><path d="M6,1V11M1,6H11" stroke="#dfe3de" stroke-width="1.4"/></svg>
<div class="b" style="left:1081px;top:31px;width:22px;height:22px;border-radius:50%;background:#323b31"></div>
<svg class="b" style="left:1087px;top:38px;" width="10" height="8" viewBox="0 0 10 8"><path d="M1.5,2L5,5.5L8.5,2" stroke="#e0e4df" stroke-width="1.5" fill="none"/></svg>
<svg class="b" style="left:10px;top:67px;" width="13" height="13" viewBox="0 0 13 13"><path d="M12,6.5H2M6.5,2L2,6.5L6.5,11" stroke="#7d857c" stroke-width="1.1" fill="none"/></svg>
<svg class="b" style="left:36px;top:67px;" width="13" height="13" viewBox="0 0 13 13"><path d="M1,6.5H11M6.5,2L11,6.5L6.5,11" stroke="#7d857c" stroke-width="1.1" fill="none"/></svg>
<svg class="b" style="left:63px;top:67px;" width="12" height="12" viewBox="0 0 12 12"><path d="M10.5,6A4.5,4.5 0 1 1 8.5,2.3" stroke="#7d857c" stroke-width="1.1" fill="none"/><path d="M7.5,0.5L10.5,1.5L9.5,4.5" fill="#8a9189"/></svg>
<div class="b" style="left:89px;top:62px;width:881px;height:25px;background:#1c241b;border-radius:13px;"></div>
<div class="b" style="left:90px;top:63px;width:22px;height:22px;border-radius:50%;background:#2b372a"></div>
<svg class="b" style="left:95px;top:68px;" width="12" height="12" viewBox="0 0 12 12"><path d="M1,3.5H11M1,8.5H11" stroke="#dfe3de" stroke-width="1.2"/><circle cx="3.5" cy="3.5" r="1.8" fill="#2b372a" stroke="#dfe3de" stroke-width="1.1"/><circle cx="8.5" cy="8.5" r="1.8" fill="#2b372a" stroke="#dfe3de" stroke-width="1.1"/></svg>
<div class="t" style="left:115px;top:67.52px;font-size:11.15px;line-height:13px;font-weight:400;color:#e3e6e2;">test.dev.cofrai.com/admin/invoices/364/edit</div>
<svg class="b" style="left:923px;top:66px;" width="15" height="15" viewBox="0 0 15 15"><rect x="1" y="2" width="8" height="9" rx="1" fill="#cfd3ce"/><rect x="6" y="5" width="8" height="9" rx="1" fill="none" stroke="#cfd3ce" stroke-width="1.2"/><text x="2.2" y="9.5" font-size="7" fill="#1c241b" font-family="Liberation Sans">G</text></svg>
<svg class="b" style="left:947px;top:67px;" width="13" height="13" viewBox="0 0 13 13"><polygon points="6.5,1 8.1,4.8 12,5 9,7.7 10,11.6 6.5,9.5 3,11.6 4,7.7 1,5 4.9,4.8" fill="none" stroke="#cfd3ce" stroke-width="1.2"/></svg>
<svg class="b" style="left:984px;top:67px;" width="13" height="13" viewBox="0 0 13 13"><path d="M2,3H5V2A1.5,1.5 0 0 1 8,2V3H11V6H12A1.5,1.5 0 0 1 12,9H11V12H2Z" fill="none" stroke="#8a9189" stroke-width="1.2"/></svg>
<div class="b" style="left:1009px;top:66px;width:1px;height:15px;background:#4a5249;"></div>
<div class="b" style="left:1017px;top:62.5px;width:58px;height:25.5px;background:#22602a;border-radius:13px;box-shadow:0 0 2px 1px #22602a;"></div>
<div class="b" style="left:1024.5px;top:67.5px;width:14px;height:14px;border-radius:50%;background:#3a8a80"></div>
<div class="t" style="left:1029px;top:70.64px;font-size:7px;line-height:8px;font-weight:400;color:#c8e0d8;">T</div>
<div class="t" style="left:1044px;top:69.20px;font-size:10px;line-height:12px;font-weight:400;color:#8c9a8c;">Work</div>
<svg class="b" style="left:1090px;top:68.5px;" width="4" height="12" viewBox="0 0 4 12"><circle cx="2" cy="2" r="1.1" fill="#9aa199"/><circle cx="2" cy="6" r="1.1" fill="#9aa199"/><circle cx="2" cy="10" r="1.1" fill="#9aa199"/></svg>
</body></html>
